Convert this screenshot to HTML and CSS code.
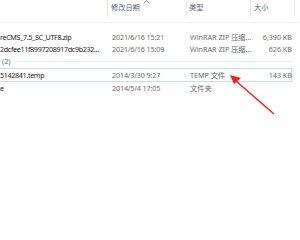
FILE: index.html
```html
<!DOCTYPE html>
<html lang="zh-CN">
<head>
	<meta charset="UTF-8">
	<title>文件列表</title>
	<link rel="stylesheet" href="styles.css">
</head>
<body>
	<section class="view">
		<div class="head">
			<div class="col name"></div>
			<div class="col date">修改日期
				<svg class="sort" width="7" height="4" viewBox="0 0 7 4"><path d="M0.5 3.5 L3.5 0.5 L6.5 3.5" fill="none" stroke="#9a9a9a" stroke-width="1"/></svg>
			</div>
			<div class="col type">类型</div>
			<div class="col size">大小</div>
		</div>
		<ul class="list">
			<li class="row">
				<span class="name">reCMS_7.5_SC_UTF8.zip</span>
				<span class="date">2021/6/16 15:21</span>
				<span class="type">WinRAR ZIP 压缩...</span>
				<span class="size">6,390 KB</span>
			</li>
			<li class="row">
				<span class="name">2dcfee11f8997208917dc9b232...</span>
				<span class="date">2021/6/16 15:09</span>
				<span class="type">WinRAR ZIP 压缩...</span>
				<span class="size">626 KB</span>
			</li>
			<li class="group">
				<span class="count">(2)</span>
				<i class="rule"></i>
			</li>
			<li class="row focus">
				<span class="name">5142841.temp</span>
				<span class="date">2014/3/30 9:27</span>
				<span class="type">TEMP 文件</span>
				<span class="size">143 KB</span>
			</li>
			<li class="row">
				<span class="name">e</span>
				<span class="date">2014/5/4 17:05</span>
				<span class="type">文件夹</span>
				<span class="size"></span>
			</li>
		</ul>
		<svg class="arrow" width="60" height="50" viewBox="0 0 60 50">
			<line x1="52" y1="46" x2="14" y2="13" stroke="#ff1a1a" stroke-width="1.5"/>
			<polygon points="8,7 19,10 12,16" fill="#ff1a1a"/>
		</svg>
	</section>
</body>
</html>
```

FILE: styles.css
```css
body{
	margin: 0;
	background: #fff;
	font-family: "Noto Sans", "Noto Sans CJK SC", sans-serif;
	font-size: 7.2px;
	color: #6d6d6d;
}
.view{
	position: relative;
	height: 240px;
}
.head{
	display: grid;
	grid-template-columns: 108px 79px 64px 44px;
	height: 22px;
	border-bottom: 1px solid #f2f2f2;
	margin-bottom: 8px;
	color: #5a6478;
}
.head .col{
	height: 17px;
	line-height: 14px;
	border-right: 1px solid #e8e8e8;
	position: relative;
}
.head .date{ padding-left: 3px; }
.head .type{ padding-left: 2px; }
.head .size{ padding-left: 3px; }
.sort{
	position: absolute;
	left: 35px;
	top: 0;
}
.list{
	list-style: none;
	margin: 0;
	padding: 0;
	width: 292px;
}
.row{
	display: grid;
	grid-template-columns: 108px 79px 64px 41px;
	height: 12px;
	line-height: 12px;
	white-space: nowrap;
}
.row .name{
	color: #1e1e1e;
	letter-spacing: -0.35px;
	overflow: hidden;
}
.row .date{
	padding-left: 4px;
	letter-spacing: -0.15px;
}
.row .type{ padding-left: 3px; }
.row .size{ text-align: right; }
.row.focus{
	height: 12px;
	border: 1px solid #c4ddf4;
	margin: 1px 0 0 -1px;
}
.group{
	display: flex;
	align-items: center;
	gap: 4px;
	height: 12px;
	padding-left: 2px;
	color: #5566aa;
}
.rule{
	flex: 1;
	height: 1px;
	background: #e3e9f1;
}
.arrow{
	position: absolute;
	left: 222px;
	top: 68px;
}
```
